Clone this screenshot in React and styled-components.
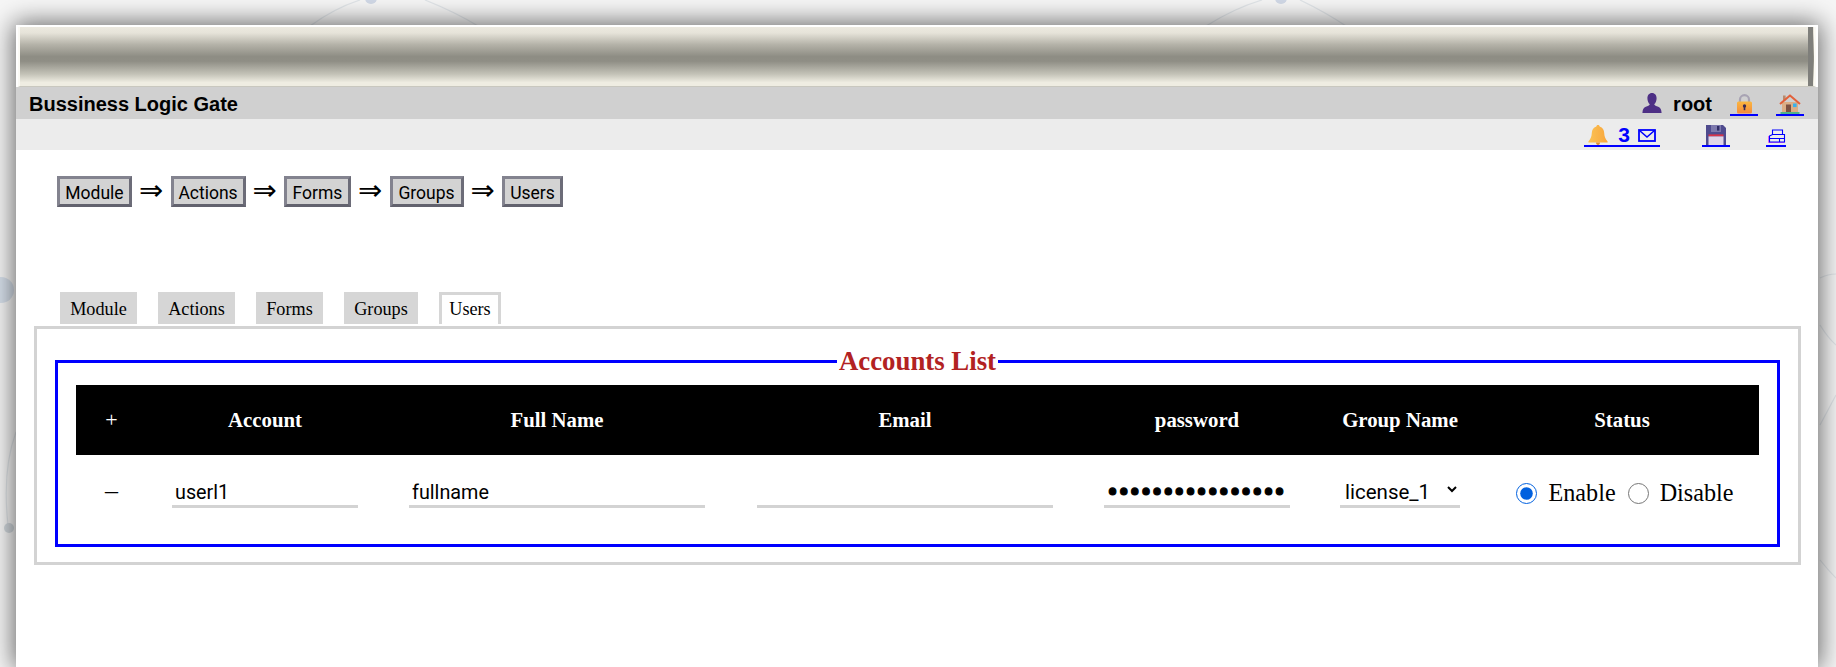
import React from 'react';
import styled, { createGlobalStyle } from 'styled-components';

const Global = createGlobalStyle`
  html, body { margin: 0; padding: 0; height: 100%; overflow: hidden; background: #f6f6f6; }
  #root { height: 100%; }
  * { box-sizing: border-box; }
`;

const Page = styled.div`
  position: relative;
  height: 667px;
  padding: 25px 18px 0 16px;
  overflow: hidden;
`;

const Backdrop = styled.svg`
  position: absolute;
  inset: 0;
  width: 1836px;
  height: 667px;
  opacity: 0.6;
`;

const Win = styled.main`
  position: relative;
  height: 642px;
  padding-top: 2px;
  background: #fff;
  box-shadow: 0 0 24px 2px rgba(0, 0, 0, 0.6);
`;

const Banner = styled.div`
  height: 60px;
  margin: 0 2px;
  border-left: 2px solid #fbfaf5;
  border-right: 2px solid #fbfaf5;
  border-bottom: 1px solid #c9c8bf;
  background: linear-gradient(
    to bottom,
    #ece9df 0%,
    #e6e3d9 10%,
    #b4b2a8 30%,
    #8e8d84 50%,
    #8f8e85 58%,
    #c4c3b8 80%,
    #efede2 94%,
    #efede2 100%
  );
  display: flex;
  justify-content: flex-end;
`;

const BannerGrip = styled.div`
  width: 5px;
  margin-right: 1px;
  background: #7f7f7b;
`;

const TitleBar = styled.div`
  height: 32px;
  background: #d0d0d0;
  display: flex;
  align-items: center;
  padding: 0 14px 0 13px;
  font-family: 'Liberation Sans', Arial, sans-serif;
  color: #000;
`;

const AppName = styled.div`
  font-size: 20px;
  font-weight: bold;
  flex: 1;
  padding-top: 2px;
`;

const UserName = styled.span`
  font-size: 20px;
  font-weight: bold;
  margin: 0 18px 0 11px;
  padding-top: 2px;
`;

const ToolBar = styled.div`
  height: 31px;
  background: #ececec;
  display: flex;
  align-items: flex-end;
  justify-content: flex-end;
  padding: 0 32px 3px 0;
  font-family: 'Liberation Sans', Arial, sans-serif;
`;

const IconLink = styled.a`
  display: flex;
  align-items: flex-end;
  justify-content: center;
  width: ${(p) => p.$w}px;
  margin-left: ${(p) => p.$ml || 0}px;
  border-bottom: 2px solid #0000ff;
  color: #0000ff;
  cursor: pointer;
`;

const TitleLink = styled(IconLink)`
  align-self: flex-end;
  margin-bottom: 3px;
`;

const Count = styled.span`
  align-self: center;
  font-size: 21px;
  font-weight: bold;
  line-height: 20px;
  margin: 0 8px 0 10px;
`;

const EnvelopeWrap = styled.span`
  margin-bottom: 3px;
`;

const PrinterWrap = styled.span`
  margin: 0 0 2px 1px;
`;

const FlowRow = styled.nav`
  display: flex;
  align-items: center;
  margin-top: 26px;
  padding-left: 41px;
`;

const FlowButton = styled.button`
  height: 31px;
  width: ${(p) => p.$w}px;
  padding: 2px 0 0;
  background: #d3d3d3;
  border: 3px solid;
  border-color: #83838f #6c6c78 #62626e #83838f;
  font-family: Roboto, 'Open Sans', sans-serif;
  font-size: 17.5px;
  color: #000;
`;

const Arrow = styled.span`
  width: 38.5px;
  margin-bottom: 3px;
  text-align: center;
  font-family: 'DejaVu Sans', sans-serif;
  font-size: 29px;
  line-height: 28px;
  color: #000;
`;

const TabRow = styled.div`
  display: flex;
  gap: 21px;
  margin-top: 85px;
  padding-left: 44px;
`;

const Tab = styled.div`
  height: 32px;
  width: ${(p) => p.$w}px;
  display: flex;
  align-items: center;
  justify-content: center;
  padding-top: ${(p) => (p.$active ? 0 : 2)}px;
  font-family: 'Liberation Serif', 'Times New Roman', serif;
  font-size: 18.2px;
  color: #000;
  background: ${(p) => (p.$active ? '#fff' : '#d6d6d6')};
  border: ${(p) => (p.$active ? '3px solid #d6d6d6' : '0')};
  border-bottom: 0;
`;

const Panel = styled.section`
  height: 239px;
  margin: 2px 17px 0 18px;
  padding: 17px 18px 0;
  border: 3px solid #d3d3d3;
`;

const Fields = styled.fieldset`
  margin: 0;
  height: 201px;
  min-width: 0;
  padding: 8px 18px 0;
  border: 3px solid #0000ff;
`;

const Legend = styled.legend`
  margin: 0 auto;
  padding: 0 2px;
  font-family: 'Liberation Serif', 'Times New Roman', serif;
  font-size: 26.8px;
  line-height: 31px;
  font-weight: bold;
  color: #b22222;
`;

const columns = '71px 236px 348px 348px 236px 170px 274px';

const HeadRow = styled.div`
  display: grid;
  grid-template-columns: ${columns};
  height: 70px;
  background: #000;
  align-items: center;
  text-align: center;
  color: #fff;
  font-family: 'Liberation Serif', 'Times New Roman', serif;
  font-size: 20.8px;
  font-weight: bold;
`;

const PlusCell = styled.div`
  font-weight: normal;
  font-size: 22px;
`;

const DataRow = styled.div`
  display: grid;
  grid-template-columns: ${columns};
  padding-top: 16px;
  font-family: 'Liberation Serif', 'Times New Roman', serif;
`;

const Cell = styled.div`
  display: flex;
  justify-content: center;
  align-items: flex-start;
  height: 37px;
`;

const TextField = styled.input`
  width: ${(p) => p.$w || 186}px;
  height: 37px;
  padding: 8px 3px 0;
  border: 0;
  border-bottom: 3px solid #d3d3d3;
  outline: 0;
  background: #fff;
  font-family: Roboto, 'Open Sans', sans-serif;
  font-size: 19.8px;
  color: #000;
`;

const PasswordField = styled(TextField)`
  padding: 9px 2px 0 3px;
  font-size: 33px;
  -webkit-text-stroke: 1.2px #000;
`;

const Select = styled.select`
  width: 120px;
  height: 37px;
  padding: 7px 1px 0;
  border: 0;
  border-bottom: 3px solid #d3d3d3;
  outline: 0;
  background: #fff;
  font-family: Roboto, 'Open Sans', sans-serif;
  font-size: 20.5px;
  color: #000;
`;

const Minus = styled.span`
  padding-top: 1px;
  font-size: 26px;
  line-height: 37px;
  color: #000;
`;

const RadioGroup = styled.div`
  display: flex;
  align-items: center;
  height: 44px;
  padding-left: 6px;
  font-size: 24.2px;
  color: #000;
`;

const Radio = styled.input`
  width: 21px;
  height: 21px;
  accent-color: #0060df;
  margin: 0 11px 0 ${(p) => p.$ml || 0}px;
`;

const Icon = styled.svg`
  display: block;
  flex: none;
`;

const Person = () => (
  <Icon width="20" height="20" viewBox="0 0 20 20">
    <path fill="#4d2f85" d="M10 0c3 0 4.6 2.4 4.6 5.2 0 2.6-1 4.8-2.4 6 .3 1.3 2 1.8 4 2.6 2 .8 3.2 2.4 3.4 6.2H.4c.2-3.8 1.4-5.4 3.4-6.2 2-.8 3.7-1.3 4-2.6-1.4-1.2-2.4-3.4-2.4-6C5.4 2.4 7 0 10 0z" />
  </Icon>
);

const Lock = () => (
  <Icon width="17" height="20" viewBox="0 0 17 20">
    <defs>
      <linearGradient id="lockG" x1="0" y1="0" x2="0" y2="1">
        <stop offset="0" stopColor="#fbb73f" />
        <stop offset="1" stopColor="#f48a3c" />
      </linearGradient>
    </defs>
    <path fill="none" stroke="#a8a3b3" strokeWidth="2.2" d="M4 8V5.6C4 3 6 1.2 8.5 1.2S13 3 13 5.6V8" />
    <rect x="1" y="7.5" width="15" height="12" rx="1.5" fill="url(#lockG)" />
    <circle cx="8.5" cy="12" r="1.7" fill="#3b2a55" />
    <rect x="7.7" y="12" width="1.6" height="4.2" fill="#3b2a55" />
  </Icon>
);

const Home = () => (
  <Icon width="22" height="20" viewBox="0 0 22 20">
    <rect x="3" y="8" width="16" height="10.5" fill="#dcae86" />
    <rect x="4" y="1.5" width="2.6" height="5" fill="#b98a6c" />
    <path fill="none" stroke="#e2603a" strokeWidth="2" strokeLinejoin="round" d="M1 10l10-8.6L21 10" />
    <rect x="7" y="10.5" width="5" height="8" fill="#7b5142" />
    <rect x="14" y="9.5" width="3.6" height="3.6" fill="#38b1ec" />
    <rect x="1.5" y="18" width="19" height="2" fill="#4fb287" />
  </Icon>
);

const Bell = () => (
  <Icon width="20" height="20" viewBox="0 0 20 20">
    <defs>
      <linearGradient id="bellG" x1="0" y1="0" x2="1" y2="0">
        <stop offset="0" stopColor="#fbc254" />
        <stop offset="1" stopColor="#f8a63c" />
      </linearGradient>
    </defs>
    <path fill="url(#bellG)" d="M10 0c1 0 1.6.6 1.6 1.6C14.8 2.4 16 5 16.2 8c.2 3.4 1 6 3.4 8.4v1.2H.4v-1.2C2.8 14 3.6 11.4 3.8 8c.2-3 1.4-5.6 4.6-6.4C8.4.6 9 0 10 0z" />
    <path fill="#e08f2e" d="M8 17.6h4c0 1.4-.8 2.4-2 2.4s-2-1-2-2.4z" />
  </Icon>
);

const Envelope = () => (
  <Icon width="18" height="13" viewBox="0 0 18 13">
    <rect x="1" y="1" width="16" height="11" fill="none" stroke="#0000ff" strokeWidth="1.8" />
    <path fill="none" stroke="#0000ff" strokeWidth="1.5" d="M1.5 1.5L9 8l7.5-6.5" />
  </Icon>
);

const Save = () => (
  <Icon width="20" height="20" viewBox="0 0 20 20">
    <path fill="#4f4b8e" d="M0 0h17l3 3v17H0z" />
    <rect x="5" y="0" width="10" height="7" fill="#7d79ad" />
    <rect x="11" y="1" width="2.4" height="4.6" fill="#2f2c66" />
    <rect x="2.5" y="9.4" width="15" height="2" fill="#d8344a" />
    <rect x="2.5" y="11.4" width="15" height="8.6" fill="#e0d5e8" />
  </Icon>
);

const Printer = () => (
  <Icon width="18" height="14" viewBox="0 0 18 14">
    <path fill="none" stroke="#e000ff" strokeWidth="0.8" opacity="0.7" d="M0.5 7v6.5h16" />
    <path fill="none" stroke="#0000ff" strokeWidth="1.1" d="M4.5 5.5V1h10v4.5M1.5 7l3-1.5h12v7.5h-15zM1.5 9.5h10v3.5M11.5 9.5h5" />
  </Icon>
);

const flow = [
  ['Module', 75],
  ['Actions', 75],
  ['Forms', 67],
  ['Groups', 74],
  ['Users', 61],
];

const tabs = [
  ['Module', 77],
  ['Actions', 77],
  ['Forms', 67],
  ['Groups', 74],
  ['Users', 62],
];

const heads = ['Account', 'Full Name', 'Email', 'password', 'Group Name', 'Status'];

export default function App() {
  return (
    <Page>
      <Global />
      <Backdrop viewBox="0 0 1836 667" aria-hidden="true">
        <g fill="none" stroke="#d3dae0" strokeWidth="1.2">
          <path d="M310 26Q335 8 360 0M425 0Q455 12 478 26" />
          <path d="M1206 26Q1235 8 1262 0M1300 0Q1325 12 1346 26" />
          <path d="M16 432Q2 470 8 525" />
          <path d="M1820 278Q1828 274 1836 274M1820 325Q1828 338 1836 345M1820 425Q1828 410 1836 395M1820 560Q1828 570 1836 578" />
        </g>
        <circle cx="371" cy="-2" r="6" fill="#b9c6de" />
        <circle cx="1281" cy="-2" r="6" fill="#b9c6de" />
        <circle cx="1" cy="290" r="13" fill="#c4d2e4" />
        <circle cx="9" cy="528" r="5" fill="#b9c4cc" />
      </Backdrop>
      <Win>
        <Banner>
          <BannerGrip />
        </Banner>
        <TitleBar>
          <AppName>Bussiness Logic Gate</AppName>
          <Person />
          <UserName>root</UserName>
          <TitleLink $w={28}>
            <Lock />
          </TitleLink>
          <TitleLink $w={28} $ml={18}>
            <Home />
          </TitleLink>
        </TitleBar>
        <ToolBar>
          <IconLink $w={76}>
            <Bell />
            <Count>3</Count>
            <EnvelopeWrap>
              <Envelope />
            </EnvelopeWrap>
          </IconLink>
          <IconLink $w={28} $ml={42}>
            <Save />
          </IconLink>
          <IconLink $w={20} $ml={36}>
            <PrinterWrap>
              <Printer />
            </PrinterWrap>
          </IconLink>
        </ToolBar>
        <FlowRow>
          {flow.map(([label, w], i) => (
            <React.Fragment key={label}>
              {i > 0 && <Arrow>⇒</Arrow>}
              <FlowButton $w={w}>{label}</FlowButton>
            </React.Fragment>
          ))}
        </FlowRow>
        <TabRow>
          {tabs.map(([label, w]) => (
            <Tab key={label} $w={w} $active={label === 'Users'}>
              {label}
            </Tab>
          ))}
        </TabRow>
        <Panel>
          <Fields>
            <Legend>Accounts List</Legend>
            <HeadRow>
              <PlusCell>+</PlusCell>
              {heads.map((h) => (
                <div key={h}>{h}</div>
              ))}
            </HeadRow>
            <DataRow>
              <Cell>
                <Minus>–</Minus>
              </Cell>
              <Cell>
                <TextField defaultValue="userl1" />
              </Cell>
              <Cell>
                <TextField $w={296} defaultValue="fullname" />
              </Cell>
              <Cell>
                <TextField $w={296} />
              </Cell>
              <Cell>
                <PasswordField type="password" defaultValue="aaaaaaaaaaaaaaaa" />
              </Cell>
              <Cell>
                <Select defaultValue="license_1">
                  <option>license_1</option>
                </Select>
              </Cell>
              <Cell>
                <RadioGroup>
                  <Radio type="radio" name="status" defaultChecked />
                  <span>Enable</span>
                  <Radio type="radio" name="status" $ml={12} />
                  <span>Disable</span>
                </RadioGroup>
              </Cell>
            </DataRow>
          </Fields>
        </Panel>
      </Win>
    </Page>
  );
}
